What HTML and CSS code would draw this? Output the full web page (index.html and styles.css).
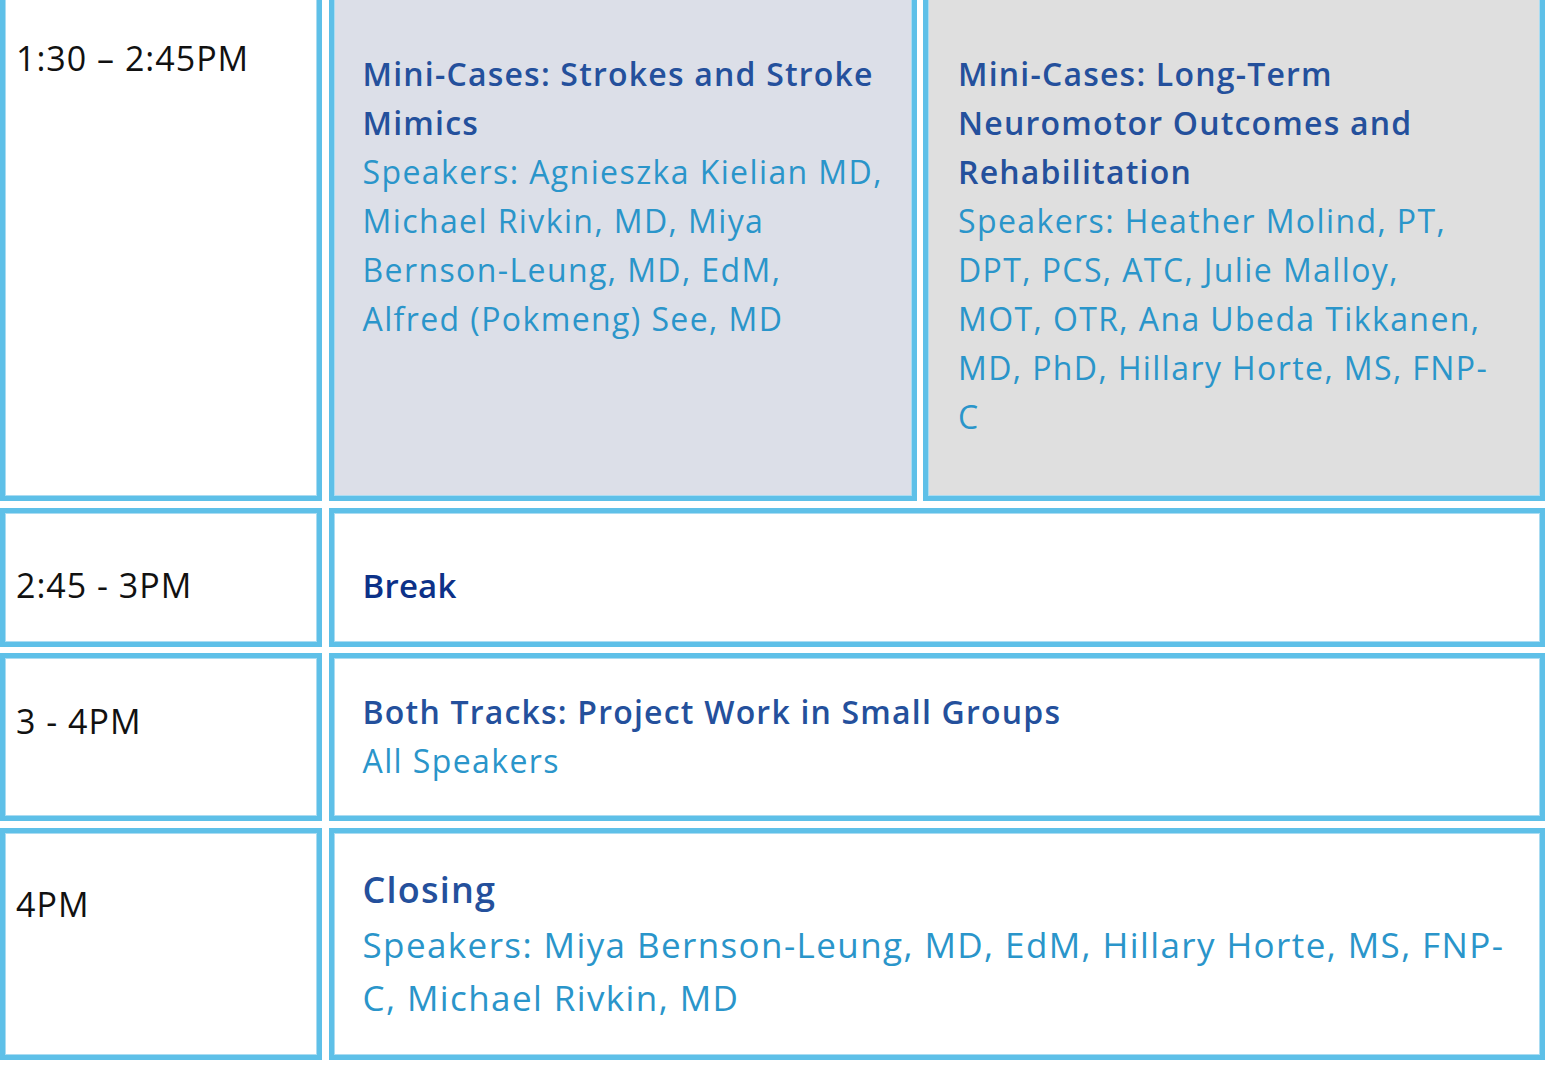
FILE: index.html
```html
<!DOCTYPE html>
<html lang="en">
<head>
<meta charset="utf-8">
<title>Agenda</title>
<link rel="stylesheet" href="styles.css">
</head>
<body>
<div class="agenda">
  <div class="cell time r1"><p>1:30 – 2:45PM</p></div>
  <div class="cell session tint-blue r1">
    <p class="title">Mini-Cases: Strokes and Stroke Mimics</p>
    <p class="speakers">Speakers: Agnieszka Kielian MD, Michael Rivkin, MD, Miya Bernson-Leung, MD, EdM, Alfred (Pokmeng) See, MD</p>
  </div>
  <div class="cell session tint-grey r1">
    <p class="title">Mini-Cases: Long-Term Neuromotor Outcomes and Rehabilitation</p>
    <p class="speakers">Speakers: Heather Molind, PT, DPT, PCS, ATC, Julie Malloy, MOT,&nbsp;OTR, Ana Ubeda Tikkanen, MD, PhD, Hillary Horte, MS, FNP-C</p>
  </div>

  <div class="cell time r2"><p>2:45 - 3PM</p></div>
  <div class="cell session span r2">
    <p class="title break">Break</p>
  </div>

  <div class="cell time r3"><p>3 - 4PM</p></div>
  <div class="cell session span r3">
    <p class="title">Both Tracks: Project Work in Small Groups</p>
    <p class="speakers">All Speakers</p>
  </div>

  <div class="cell time r4"><p>4PM</p></div>
  <div class="cell session span r4 large">
    <p class="title">Closing</p>
    <p class="speakers">Speakers: Miya Bernson-Leung, MD, EdM, Hillary Horte, MS, FNP-C, Michael Rivkin, MD</p>
  </div>
</div>
</body>
</html>
```
FILE: styles.css
```css
html, body {
  margin: 0;
  padding: 0;
  background: #ffffff;
  overflow: hidden;
}

body {
  font-family: "Open Sans", "Noto Sans", sans-serif;
  color: #111111;
}

p {
  margin: 0;
}

.agenda {
  display: grid;
  grid-template-columns: 322px 588px 622px;
  grid-template-rows: 507px 139px 168px 232px;
  gap: 6.5px;
  width: 1545px;
  margin-top: -6px;
}

.cell {
  box-sizing: border-box;
  border: 5px solid #5ec0e8;
  box-shadow: inset 0 0 0 1px #aadcf2;
  background: #ffffff;
}

.span {
  grid-column: 2 / 4;
}

.tint-blue {
  background: #dcdfe8;
}

.tint-grey {
  background: #dfdfdf;
}

.time {
  padding-left: 11px;
  font-size: 34px;
  line-height: 51px;
  letter-spacing: 1px;
  color: #111111;
}

.session {
  padding-left: 29px;
  padding-right: 24px;
}

.tint-grey {
  padding-left: 30px;
  padding-right: 34px;
}

.title {
  font-weight: 600;
  font-size: 32px;
  line-height: 49px;
  letter-spacing: 1.2px;
  color: #24509c;
}

.speakers {
  font-size: 32px;
  line-height: 49px;
  letter-spacing: 1.4px;
  color: #2a95ca;
}

.break {
  font-size: 33px;
  letter-spacing: 0.2px;
  color: #0c3188;
}

.large {
  padding-right: 29px;
}

.large .title {
  font-size: 36px;
  line-height: 57px;
}

.large .speakers {
  font-size: 35px;
  line-height: 53px;
  letter-spacing: 1.4px;
}

.time.r1 { padding-top: 34px; }
.session.r1 { padding-top: 50px; }

.time.r2 { padding-top: 47px; }
.session.r2 { padding-top: 48px; }

.time.r3 { padding-top: 38px; }
.session.r3 { padding-top: 29px; }

.time.r4 { padding-top: 46px; }
.session.r4 { padding-top: 28px; }
```
